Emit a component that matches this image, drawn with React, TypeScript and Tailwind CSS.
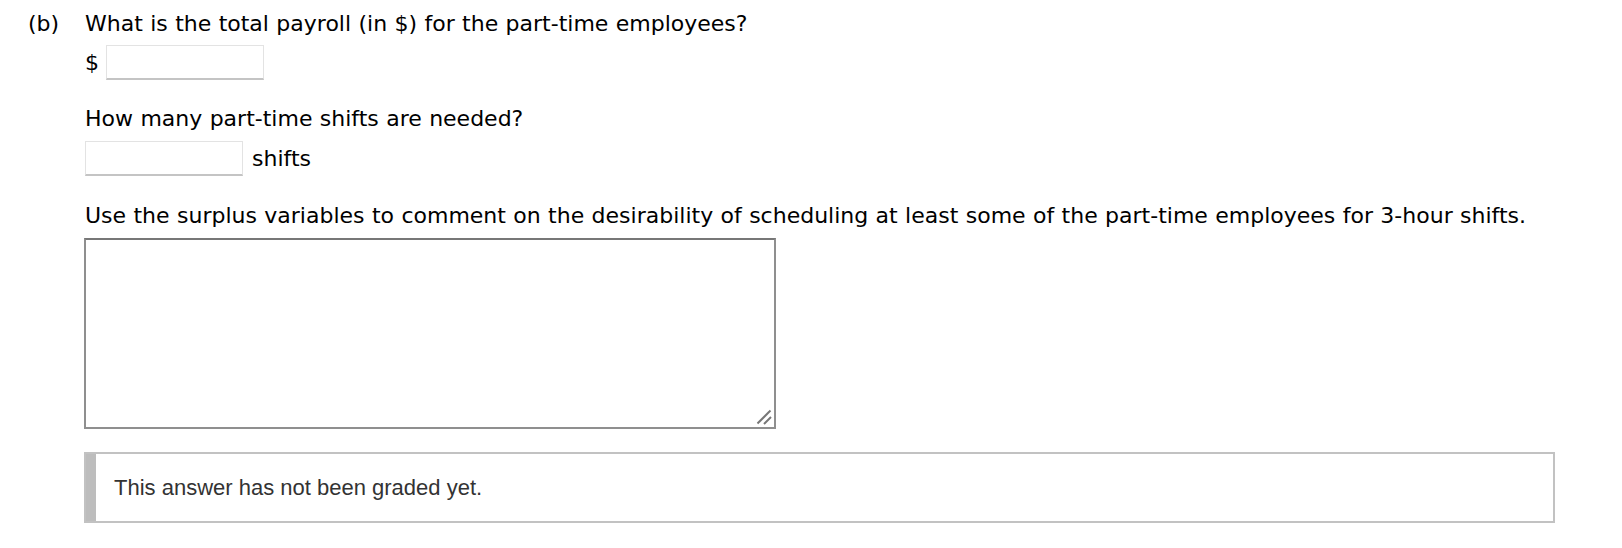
export default function App() {
  return (
    <div className="min-h-screen bg-white text-black text-[22px] font-['DejaVu_Sans',Verdana,sans-serif] pt-[11px] pl-[28px]">
      <div className="flex">
        <div className="w-[57px] leading-[26px]">(b)</div>
        <div className="flex flex-col">
          <p className="leading-[26px] [word-spacing:0.4px]">What is the total payroll (in $) for the part-time employees?</p>

          <div className="mt-[8px] flex items-center gap-[8px]">
            <span className="w-[13px] leading-[26px]">$</span>
            <input
              type="text"
              className="h-[35px] w-[158px] border border-[#e3e3e3] border-b-[#c4c4c4] border-b-2 bg-white px-2 outline-none"
            />
          </div>

          <p className="mt-[26px] leading-[26px] [word-spacing:0.4px]">How many part-time shifts are needed?</p>

          <div className="mt-[9px] flex items-center gap-[9px]">
            <input
              type="text"
              className="h-[35px] w-[158px] border border-[#e3e3e3] border-b-[#c4c4c4] border-b-2 bg-white px-2 outline-none"
            />
            <span className="leading-[26px]">shifts</span>
          </div>

          <p className="mt-[27px] leading-[26px] [word-spacing:0.4px]">
            Use the surplus variables to comment on the desirability of scheduling at least some of the part-time employees for 3-hour shifts.
          </p>

          <div className="relative mt-[9px] -ml-px w-[692px]">
            <textarea className="block h-[191px] w-[692px] border-2 border-[#8f8f8f] border-t-[#777777] bg-white p-1 outline-none resize-none" />
            {/* resize grip */}
            <svg className="pointer-events-none absolute bottom-[4px] right-[4px]" width="16" height="16" viewBox="0 0 16 16">
              <line x1="1.5" y1="14.5" x2="14.5" y2="1.5" stroke="#777" strokeWidth="2" />
              <line x1="8" y1="15" x2="15" y2="8" stroke="#777" strokeWidth="2" />
            </svg>
          </div>

          <div className="mt-[23px] -ml-px flex h-[71px] w-[1471px] border-2 border-[#c2c2c2]">
            <div className="w-[10px] bg-[#bdbdbd]" />
            <div className="flex items-center pl-[18px] text-[22px] text-[#333333] font-['Liberation_Sans',Arial,sans-serif]">
              This answer has not been graded yet.
            </div>
          </div>
        </div>
      </div>
    </div>
  );
}
